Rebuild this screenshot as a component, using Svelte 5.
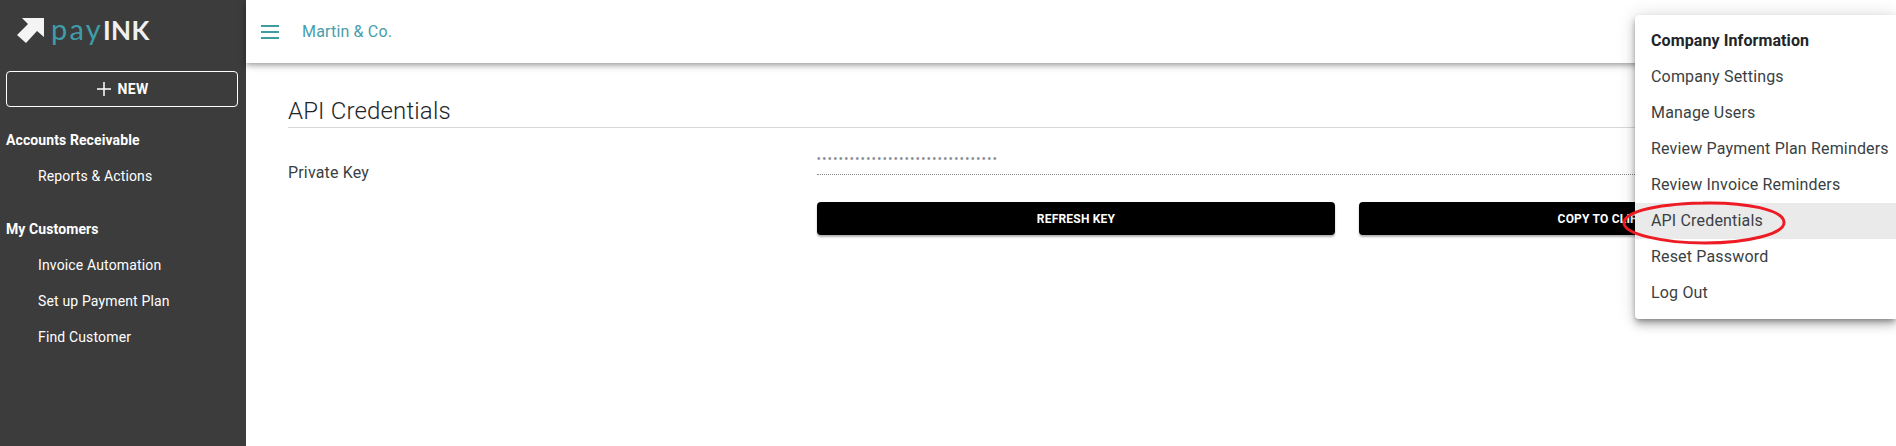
<script>
  const sections = [
    { title: "Accounts Receivable", links: ["Reports & Actions"] },
    { title: "My Customers", links: ["Invoice Automation", "Set up Payment Plan", "Find Customer"] }
  ];

  const menuItems = [
    "Company Settings",
    "Manage Users",
    "Review Payment Plan Reminders",
    "Review Invoice Reminders",
    "API Credentials",
    "Reset Password",
    "Log Out"
  ];
</script>

<div class="page">
  <aside class="sidebar">
    <div class="logo">
      <svg class="logo-arrow" viewBox="0 0 27 26" width="27" height="26">
        <path d="M5 0 H27 V19 L20 13 L9 25 L0 17 L11 6 Z" fill="#f4f4f4" />
      </svg>
      <span class="brand"><span class="pay">pay</span><span class="ink">INK</span></span>
    </div>

    <button class="new-btn">
      <svg viewBox="0 0 14 14" width="14" height="14">
        <path d="M7 0 V14 M0 7 H14" stroke="#fff" stroke-width="1.5" fill="none" />
      </svg>
      <span>NEW</span>
    </button>

    {#each sections as section}
      <div class="section">
        <h4>{section.title}</h4>
        {#each section.links as link}
          <a class="nav-link" href="#top">{link}</a>
        {/each}
      </div>
    {/each}
  </aside>

  <div class="main">
    <header class="topbar">
      <div class="burger"><i></i><i></i><i></i></div>
      <span class="company">Martin &amp; Co.</span>
    </header>

    <section class="content">
      <h2>API Credentials</h2>
      <div class="form">
        <span class="label">Private Key</span>
        <div class="field">
          <input type="password" value="xxxxxxxxxxxxxxxxxxxxxxxxxxxxxxxxx" readonly />
          <div class="actions">
            <button class="black-btn">REFRESH KEY</button>
            <button class="black-btn">COPY TO CLIPBOARD</button>
          </div>
        </div>
      </div>
    </section>
  </div>

  <nav class="menu">
    <div class="menu-item menu-head">Company Information</div>
    {#each menuItems as item}
      <div class="menu-item" class:active={item === "API Credentials"}>{item}</div>
    {/each}
  </nav>

  <svg class="circle" viewBox="0 0 172 48" width="172" height="48">
    <path
      d="M84 4 C128 3 164 11 165 23 C166 35 128 44 86 44 C44 44 5 35 5 24 C5 12 42 4 92 4"
      fill="none"
      stroke="#ed1c24"
      stroke-width="3"
    />
  </svg>
</div>

<style>
  :global(body) {
    font-family: Roboto, "Liberation Sans", sans-serif;
    overflow: hidden;
  }

  .page {
    display: flex;
    width: 1896px;
    height: 446px;
    position: relative;
    overflow: hidden;
    background: #fff;
  }

  .sidebar {
    width: 246px;
    flex-shrink: 0;
    background: #3c3c3c;
    color: #fff;
    padding: 0 6px;
    box-sizing: border-box;
  }

  .logo {
    display: flex;
    align-items: center;
    height: 62px;
    padding-left: 11px;
    margin-bottom: 9px;
    font-family: Lato, sans-serif;
    line-height: 1;
  }

  .logo-arrow {
    margin-right: 7px;
  }

  .brand {
    margin-bottom: 5px;
  }

  .pay {
    color: #3f9daa;
    font-size: 29px;
    letter-spacing: 2.2px;
  }

  .ink {
    color: #f0f0f0;
    font-size: 26px;
    font-weight: 700;
    letter-spacing: 0.5px;
  }

  .new-btn {
    display: flex;
    align-items: center;
    justify-content: center;
    gap: 6px;
    width: 232px;
    height: 36px;
    background: transparent;
    border: 1px solid #fff;
    border-radius: 4px;
    color: #fff;
    font: 700 14px Roboto, sans-serif;
    letter-spacing: 0.4px;
    padding: 0 0 0 2px;
  }

  .new-btn + .section {
    margin-top: 15px;
  }

  .section {
    margin-bottom: 17px;
  }

  h4 {
    margin: 0;
    height: 36px;
    line-height: 36px;
    font-size: 14px;
    font-weight: 700;
    letter-spacing: 0.1px;
  }

  .nav-link {
    display: block;
    height: 36px;
    line-height: 36px;
    padding-left: 32px;
    color: #fff;
    font-size: 14px;
    letter-spacing: 0.15px;
    text-decoration: none;
  }

  .main {
    flex: 1;
    min-width: 0;
  }

  .topbar {
    display: flex;
    align-items: center;
    height: 63px;
    padding-left: 15px;
    background: #fff;
    box-shadow: 0 2px 4px -1px rgba(0, 0, 0, 0.2), 0 4px 5px rgba(0, 0, 0, 0.14), 0 1px 10px rgba(0, 0, 0, 0.12);
  }

  .burger {
    display: flex;
    flex-direction: column;
    gap: 4px;
    width: 18px;
    margin-right: 23px;
  }

  .burger i {
    display: block;
    height: 2px;
    background: #3f9da0;
  }

  .company {
    color: #4a9dab;
    font-size: 16px;
    letter-spacing: 0.17px;
  }

  .content {
    padding: 33px 19px 0 42px;
  }

  h2 {
    margin: 0;
    height: 31px;
    line-height: 31px;
    font-size: 24px;
    font-weight: 300;
    letter-spacing: 0.16px;
    color: #212529;
    border-bottom: 1px solid #d8d8d8;
  }

  .form {
    display: grid;
    grid-template-columns: 529px 1fr;
    margin-top: 11px;
  }

  .label {
    margin-top: 24px;
    font-size: 16px;
    letter-spacing: 0.17px;
    color: #3a3f44;
  }

  input {
    display: block;
    width: 100%;
    height: 36px;
    box-sizing: border-box;
    border: 0;
    border-bottom: 1px dotted #888;
    outline: 0;
    padding: 4px 0 0;
    font: 400 10px "Liberation Sans", sans-serif;
    letter-spacing: 2px;
    color: #8a8f96;
  }

  .actions {
    display: grid;
    grid-template-columns: 518px 518px;
    column-gap: 24px;
    margin-top: 27px;
  }

  .black-btn {
    height: 33px;
    padding: 0;
    border: 0;
    border-radius: 4px;
    background: #000;
    color: #fff;
    font: 700 12px Roboto, sans-serif;
    letter-spacing: 0.2px;
    box-shadow: 0 2px 2px rgba(0, 0, 0, 0.3);
  }

  .menu {
    position: absolute;
    top: 15px;
    left: 1635px;
    width: 261px;
    height: 304px;
    padding-top: 8px;
    box-sizing: border-box;
    background: #fff;
    border-radius: 4px 0 0 4px;
    box-shadow: 0 3px 5px -1px rgba(0, 0, 0, 0.3), 0 6px 10px rgba(0, 0, 0, 0.2), 0 1px 18px rgba(0, 0, 0, 0.16);
  }

  .menu-item {
    height: 36px;
    line-height: 36px;
    padding-left: 16px;
    font-size: 16px;
    letter-spacing: 0.17px;
    color: #3a3f44;
    white-space: nowrap;
  }

  .menu-head {
    font-weight: 700;
    letter-spacing: 0.1px;
    color: #212529;
  }

  .active {
    background: #eaeaea;
  }

  .circle {
    position: absolute;
    left: 1619px;
    top: 199px;
  }
</style>
